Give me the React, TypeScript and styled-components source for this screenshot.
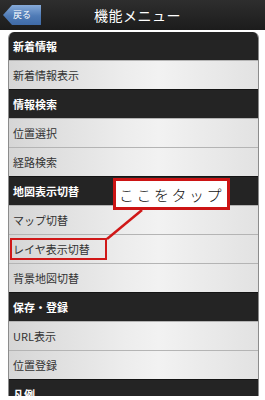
import styled, { createGlobalStyle } from 'styled-components'

const GlobalStyle = createGlobalStyle`
  html, body {
    margin: 0;
    padding: 0;
    background: #ffffff;
    overflow: hidden;
  }
  body {
    font-family: "Noto Sans CJK JP", "Liberation Sans", sans-serif;
  }
`

const Page = styled.div`
  position: relative;
  width: 265px;
  height: 396px;
  overflow: hidden;
  background: #ffffff;
`

const Header = styled.header`
  position: relative;
  height: 30px;
  display: flex;
  align-items: center;
  justify-content: center;
  background: linear-gradient(to bottom, #2e2e2e, #1c1c1c);
`

const BackButton = styled.button`
  position: absolute;
  left: 3px;
  top: 5px;
  width: 38px;
  height: 20px;
  border: none;
  padding: 0 0 0 10px;
  color: #ffffff;
  font-family: inherit;
  font-size: 9px;
  line-height: 20px;
  text-align: left;
  background: linear-gradient(to bottom, #86aad8, #4f7bb6 55%, #3f6aa6);
  clip-path: polygon(0 50%, 9px 0, 100% 0, 100% 100%, 9px 100%);
`

const Title = styled.h1`
  margin: 0 0 0 10px;
  color: #ffffff;
  font-size: 14px;
  font-weight: 400;
  letter-spacing: 0.5px;
`

const Menu = styled.ul`
  list-style: none;
  margin: 2px 0 0 8px;
  padding: 0;
  width: 249px;
  border-left: 1px solid #8c8c8c;
  border-right: 1px solid #8c8c8c;
  border-radius: 6px 6px 0 0;
  overflow: hidden;
`

const Row = styled.li<{ $head?: boolean; $marked?: boolean }>`
  height: 28px;
  display: flex;
  align-items: center;
  padding-left: ${({ $marked }) => ($marked ? '1px' : '4px')};
  font-size: 11px;
  border-top: 1px solid ${({ $head }) => ($head ? '#141414' : '#b4b4b4')};
  color: ${({ $head }) => ($head ? '#ffffff' : '#333333')};
  font-weight: ${({ $head }) => ($head ? 700 : 400)};
  background: ${({ $head }) =>
    $head
      ? '#242424'
      : 'linear-gradient(to right, #d6d6d6, #ececec 45%, #f2f2f2 60%, #e2e2e2)'};
  &:first-child {
    border-top: none;
  }
`

const Marked = styled.span`
  display: flex;
  align-items: center;
  height: 18px;
  width: 92px;
  padding-left: 1px;
  border: 2px solid #d01818;
`

const Callout = styled.div`
  position: absolute;
  left: 113px;
  top: 178px;
  width: 111px;
  height: 26px;
  border: 3px solid #cc1414;
  background: #ffffff;
  display: flex;
  align-items: center;
  justify-content: center;
  white-space: nowrap;
  font-size: 15px;
  letter-spacing: 2.5px;
  color: #111111;
  font-weight: 300;
`

const Pointer = styled.svg`
  position: absolute;
  left: 0;
  top: 0;
  pointer-events: none;
`

const rows: { label: string; head?: boolean; marked?: boolean }[] = [
  { label: '新着情報', head: true },
  { label: '新着情報表示' },
  { label: '情報検索', head: true },
  { label: '位置選択' },
  { label: '経路検索' },
  { label: '地図表示切替', head: true },
  { label: 'マップ切替' },
  { label: 'レイヤ表示切替', marked: true },
  { label: '背景地図切替' },
  { label: '保存・登録', head: true },
  { label: 'URL表示' },
  { label: '位置登録' },
  { label: '凡例', head: true },
]

export default function App() {
  return (
    <Page>
      <GlobalStyle />
      <Header>
        <BackButton>戻る</BackButton>
        <Title>機能メニュー</Title>
      </Header>
      <Menu>
        {rows.map((r) => (
          <Row key={r.label} $head={r.head} $marked={r.marked}>
            {r.marked ? <Marked>{r.label}</Marked> : r.label}
          </Row>
        ))}
      </Menu>
      <Pointer width="265" height="396">
        <line x1="142" y1="210" x2="107" y2="239" stroke="#d01818" strokeWidth="2.5" />
      </Pointer>
      <Callout>ここをタップ</Callout>
    </Page>
  )
}
